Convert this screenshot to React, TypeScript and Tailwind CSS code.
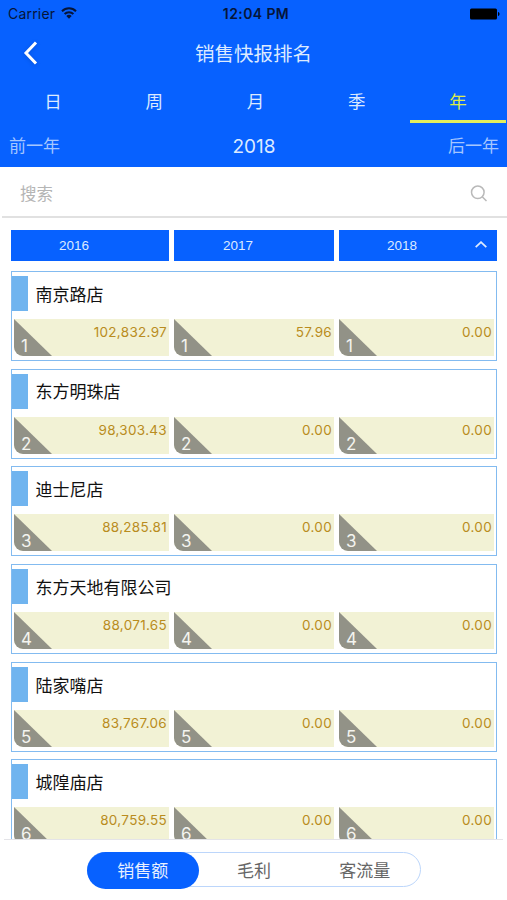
const tabs = ["日", "周", "月", "季", "年"];

const stores = [
    { name: "南京路店", values: ["102,832.97", "57.96", "0.00"] },
    { name: "东方明珠店", values: ["98,303.43", "0.00", "0.00"] },
    { name: "迪士尼店", values: ["88,285.81", "0.00", "0.00"] },
    { name: "东方天地有限公司", values: ["88,071.65", "0.00", "0.00"] },
    { name: "陆家嘴店", values: ["83,767.06", "0.00", "0.00"] },
    { name: "城隍庙店", values: ["80,759.55", "0.00", "0.00"] },
];

function StatusBar() {
    return (
        <div className="grid h-[28px] grid-cols-3 items-center pl-[8px] pr-[7px] pb-px text-[14px] text-[#061539]">
            <div className="flex items-center gap-[6px]">
                <span className="tracking-[0.2px]">Carrier</span>
                <svg className="-mt-px" width="16" height="12" viewBox="0 0 16 12" fill="none" stroke="currentColor" strokeWidth="2">
                    <path d="M1 4.2a10 10 0 0 1 14 0" />
                    <path d="M3.6 7a6.3 6.3 0 0 1 8.8 0" />
                    <path d="M8 11.8 5.3 9a3.9 3.9 0 0 1 5.4 0z" fill="currentColor" stroke="none" />
                </svg>
            </div>
            <span className="whitespace-nowrap pl-[4px] text-center font-semibold tracking-[0.4px]">12:04 PM</span>
            <svg className="justify-self-end" width="30" height="12" viewBox="0 0 30 12" fill="#000">
                <rect x="0" y="0.5" width="27" height="11" rx="1.5" />
                <path d="M28 4v4c2-.6 2-3.4 0-4z" />
            </svg>
        </div>
    );
}

function Header() {
    return (
        <header className="h-[167px] shrink-0 bg-[#0761ff] text-[#dceaff]">
            <StatusBar />
            <div className="grid h-[50px] grid-cols-[60px_1fr_60px] items-center">
                <svg className="ml-[22px] drop-shadow-sm" width="16" height="24" viewBox="0 0 16 24" fill="none" stroke="#fff" strokeWidth="3">
                    <path d="M14 1.5 4 12l10 10.500" />
                </svg>
                <h1 className="pt-[4px] text-center text-[19.500px]">销售快报排名</h1>
            </div>
            <div className="flex h-[45px]">
                {tabs.map((tab) => (
                    <button
                        key={tab}
                        className={
                            tab === "年"
                                ? "mr-px ml-[5px] flex-1 border-b-[3px] border-[#e3ef5c] pt-[7px] text-[17.500px] text-[#dcec4c]"
                                : "flex-1 border-b-[3px] border-transparent pl-[5px] pt-[7px] text-[17.500px]"
                        }
                    >
                        {tab}
                    </button>
                ))}
            </div>
            <div className="grid h-[44px] grid-cols-3 items-center pl-[9px] pr-[8px] pt-[4px] text-[17px]">
                <span className="text-[#a5c6ff]">前一年</span>
                <span className="text-center text-[19px]">2018</span>
                <span className="text-right text-[#a5c6ff]">后一年</span>
            </div>
        </header>
    );
}

function Cell({ rank, value }: { rank: number; value: string }) {
    return (
        <div className="relative h-[37px] overflow-hidden rounded-bl-[9px] bg-[#f2f2d5] pr-[2px] text-right text-[13.500px] leading-[26px] tracking-[0.3px] text-[#b98c20]">
            <svg className="absolute left-0 top-0" width="38" height="37" viewBox="0 0 38 37" fill="#929287">
                <path d="M0 0 38 37H0z" />
            </svg>
            <span className="absolute -bottom-px left-[7px] text-[17px] leading-[22px] tracking-normal text-[#f4f4ef]">{rank}</span>
            {value}
        </div>
    );
}

export default function App() {
    return (
        <div className="flex h-[900px] w-[507px] flex-col overflow-hidden bg-white font-[Inter,'Noto_Sans_CJK_SC',sans-serif]">
            <Header />
            <div className="ml-[2px] flex h-[51px] shrink-0 items-center justify-between border-b-2 border-[#e1e1e1] pl-[18px] pr-[20px]">
                <span className="pt-[5px] text-[16.500px] text-[#b5b5b5]">搜索</span>
                <svg className="mt-[4px]" width="17" height="17" viewBox="0 0 17 17" fill="none" stroke="#b9b9b9" strokeWidth="1.5">
                    <circle cx="7.800" cy="7.300" r="6.300" />
                    <path d="m12 11.500 4.500 4.500" />
                </svg>
            </div>
            <main className="min-h-0 flex-1 overflow-hidden pl-[11px] pr-[10px] pt-[11.500px]">
                <div className="grid h-[31.500px] grid-cols-[158px_160px_158px] gap-[5px] font-['Liberation_Sans'] text-[13.500px] text-[#dceaff]">
                    <div className="flex items-center bg-[#0761ff] pl-[48px] pt-[2px]">2016</div>
                    <div className="flex items-center bg-[#0761ff] pl-[49px] pt-[2px]">2017</div>
                    <div className="flex items-center justify-between bg-[#0761ff] pl-[48px] pr-[10px] pt-[2px]">
                        2018
                        <svg className="-mt-[4px]" width="12" height="7" viewBox="0 0 12 7" fill="none" stroke="currentColor" strokeWidth="1.800">
                            <path d="m.7 6.200 5.300-5 5.300 5" />
                        </svg>
                    </div>
                </div>
                <div className="mt-[10px] flex flex-col gap-[7.700px]">
                    {stores.map((store, i) => (
                        <div key={store.name} className="h-[90px] shrink-0 border border-[#83bbf0] pt-[4px]">
                            <div className="flex h-[35px] items-center">
                                <div className="h-full w-[16px] bg-[#70b4ef]" />
                                <h2 className="pl-[7.500px] pt-[4px] text-[17px] text-[#111]">{store.name}</h2>
                            </div>
                            <div className="mx-[2px] mt-[8px] grid grid-cols-[155px_160px_155px] gap-[5px]">
                                {store.values.map((value, n) => (
                                    <Cell key={n} rank={i + 1} value={value} />
                                ))}
                            </div>
                        </div>
                    ))}
                </div>
            </main>
            <footer className="mx-[4px] h-[61px] shrink-0 border-t border-[#e4e4e8] pt-[12px]">
                <div className="ml-[83px] flex h-[35px] w-[334px] rounded-full border border-[#bcd6fb] text-[17px] text-[#666]">
                    <button className="-ml-px -mt-px h-[37px] w-[112px] rounded-full bg-[#0761ff] pt-[2px] text-[#e8f0ff]">销售额</button>
                    <button className="w-[111px] pt-[4px]">毛利</button>
                    <button className="w-[111px] pt-[4px]">客流量</button>
                </div>
            </footer>
        </div>
    );
}
